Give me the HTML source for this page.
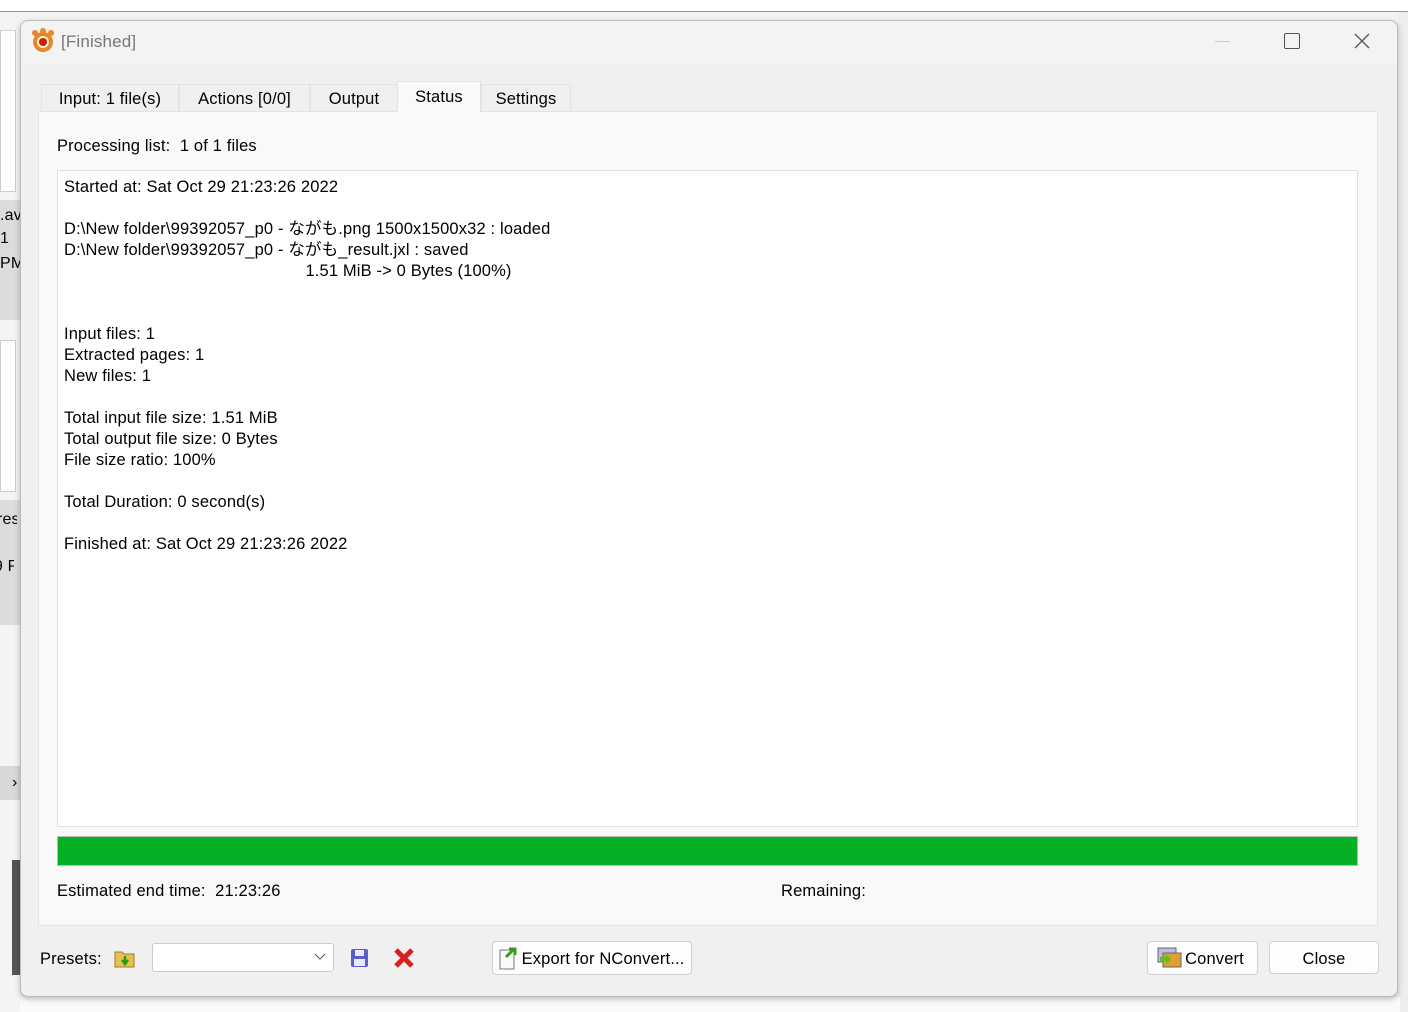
<!DOCTYPE html>
<html><head><meta charset="utf-8"><style>
body{margin:0;width:1408px;height:1012px;overflow:hidden;background:#f3f3f3;font-family:"Segoe UI","Liberation Sans","Noto Sans CJK JP",sans-serif;font-size:16.5px;letter-spacing:0.15px;color:#000;position:relative}
.a{position:absolute}
.t{position:absolute;white-space:pre;line-height:21px}
.btn{position:absolute;background:#fdfdfd;border:1px solid #d0d0d0;border-radius:4px;box-sizing:border-box;text-align:center;line-height:35px}
.tab{position:absolute;top:84px;height:27px;background:#f0f0f0;border:1px solid #e3e3e3;border-bottom:none;box-sizing:border-box;line-height:28px;text-align:center}
.lr{position:absolute;left:0;width:20px;font-size:16px;overflow:hidden;white-space:nowrap;line-height:20px}
</style></head><body>
<div class="a" style="left:0;top:0;width:1408px;height:11px;background:#fff;border-bottom:1px solid #999"></div>
<div class="a" style="left:0;top:12px;width:20px;height:1000px;background:#f4f4f4"></div>
<div class="a" style="left:0;top:200px;width:20px;height:120px;background:#dcdcdc"></div>
<div class="a" style="left:0;top:500px;width:20px;height:125px;background:#dcdcdc"></div>
<div class="lr" style="top:206px;left:0">.av</div>
<div class="lr" style="top:229px;left:0">1</div>
<div class="lr" style="top:254px;left:0">PM</div>
<div class="lr" style="top:510px;left:-3px">resu</div>
<div class="lr" style="top:557px;left:-6px">9 PM</div>
<div class="a" style="left:0;top:30px;width:14px;height:160px;background:#fff;border:1px solid #ccc"></div>
<div class="a" style="left:0;top:340px;width:14px;height:150px;background:#fff;border:1px solid #ccc"></div>
<div class="a" style="left:0;top:766px;width:20px;height:34px;background:#d8d8d8"></div>
<div class="lr" style="top:773px;left:12px">›</div>
<div class="a" style="left:12px;top:860px;width:8px;height:115px;background:#555"></div>
<div class="a" style="left:1398px;top:12px;width:10px;height:1000px;background:#eee"></div>
<div class="a" style="left:20px;top:997px;width:1380px;height:15px;background:#fafafa"></div>
<div class="a" style="left:20px;top:20px;width:1378px;height:977px;background:#f0f0f0;border:1px solid #bbb;border-radius:8px;box-sizing:border-box;box-shadow:0 2px 6px rgba(0,0,0,.25);overflow:hidden">
 <div class="a" style="left:0;top:0;width:1378px;height:44px;background:#f3f3f3"></div>
</div>
<svg class="a" style="left:30px;top:28px" width="26" height="26" viewBox="0 0 26 26"><g fill="#e8862a"><circle cx="13" cy="14" r="10"/><circle cx="5" cy="5" r="3"/><circle cx="13" cy="3" r="3"/><circle cx="21" cy="5" r="3"/></g><circle cx="13" cy="14" r="6" fill="#fff3d0"/><circle cx="13" cy="14" r="4" fill="#c81c0c"/></svg>
<div class="t" style="left:61px;top:31px;color:#777;font-size:17px">[Finished]</div>
<div class="a" style="left:1215px;top:41px;width:15px;height:1px;background:#ccc"></div>
<div class="a" style="left:1284px;top:33px;width:14px;height:14px;border:1px solid #555;border-radius:2px"></div>
<svg class="a" style="left:1354px;top:33px" width="16" height="16"><path d="M1 1L15 15M15 1L1 15" stroke="#555" stroke-width="1.3"/></svg>
<div class="a" style="left:38px;top:111px;width:1340px;height:815px;background:#f9f9f9;border:1px solid #e3e3e3;box-sizing:border-box"></div>
<div class="tab" style="left:41px;width:138px">Input: 1 file(s)</div>
<div class="tab" style="left:179px;width:131px">Actions [0/0]</div>
<div class="tab" style="left:310px;width:88px">Output</div>
<div class="tab" style="left:397px;top:81px;height:31px;width:84px;background:#f9f9f9;line-height:31px">Status</div>
<div class="tab" style="left:481px;width:90px">Settings</div>
<div class="t" style="left:57px;top:136px">Processing list:  1 of 1 files</div>
<div class="a" style="left:57px;top:170px;width:1301px;height:657px;background:#fff;border:1px solid #e0e0e0;box-sizing:border-box"></div>
<div class="t" style="left:64px;top:177px">Started at: Sat Oct 29 21:23:26 2022

D:\New folder\99392057_p0 - ながも.png 1500x1500x32 : loaded
D:\New folder\99392057_p0 - ながも_result.jxl : saved
                                                   1.51 MiB -&gt; 0 Bytes (100%)


Input files: 1
Extracted pages: 1
New files: 1

Total input file size: 1.51 MiB
Total output file size: 0 Bytes
File size ratio: 100%

Total Duration: 0 second(s)

Finished at: Sat Oct 29 21:23:26 2022</div>
<div class="a" style="left:57px;top:836px;width:1301px;height:30px;background:#06b025;border:1px solid #bcbcbc;box-sizing:border-box"></div>
<div class="t" style="left:57px;top:881px">Estimated end time:  21:23:26</div>
<div class="t" style="left:781px;top:881px">Remaining:</div>
<div class="t" style="left:40px;top:949px">Presets:</div>
<svg class="a" style="left:114px;top:947px" width="22" height="22"><path d="M1 5h7l2 2h10v13H1z" fill="#e8c050" stroke="#a07a20"/><path d="M11 9v6M8 13l3 4 3-4" stroke="#2a9a20" stroke-width="2.5" fill="none"/></svg>
<div class="a" style="left:152px;top:943px;width:182px;height:29px;background:#fff;border:1px solid #ccc;box-sizing:border-box;border-radius:3px"></div>
<svg class="a" style="left:314px;top:953px" width="12" height="8"><path d="M1 1l5 5 5-5" stroke="#555" fill="none"/></svg>
<svg class="a" style="left:349px;top:947px" width="22" height="22"><rect x="2" y="2" width="17" height="18" rx="2" fill="#5a5ec8"/><rect x="6" y="3" width="9" height="6" fill="#e8e8ff"/><rect x="5" y="12" width="11" height="7" fill="#e8e8ff"/></svg>
<svg class="a" style="left:393px;top:947px" width="22" height="22"><path d="M3 3L19 19M19 3L3 19" stroke="#d82020" stroke-width="5"/></svg>
<div class="btn" style="left:492px;top:941px;width:200px;height:34px;padding-left:22px">Export for NConvert...</div>
<svg class="a" style="left:498px;top:945px" width="22" height="26"><rect x="2" y="5" width="14" height="19" fill="#fafafa" stroke="#777"/><path d="M8 12l8-8M11 4h6v6" stroke="#3a9a20" stroke-width="3" fill="none"/></svg>
<div class="btn" style="left:1147px;top:941px;width:111px;height:34px;padding-left:24px">Convert</div>
<svg class="a" style="left:1157px;top:947px" width="26" height="22"><rect x="1" y="1" width="18" height="14" fill="#b8c0e8" stroke="#666"/><rect x="6" y="6" width="18" height="14" fill="#e0a030" stroke="#666"/><path d="M3 10h6v-3l5 5-5 5v-3H3z" fill="#60c020"/></svg>
<div class="btn" style="left:1269px;top:941px;width:110px;height:33px">Close</div>
</body></html>
